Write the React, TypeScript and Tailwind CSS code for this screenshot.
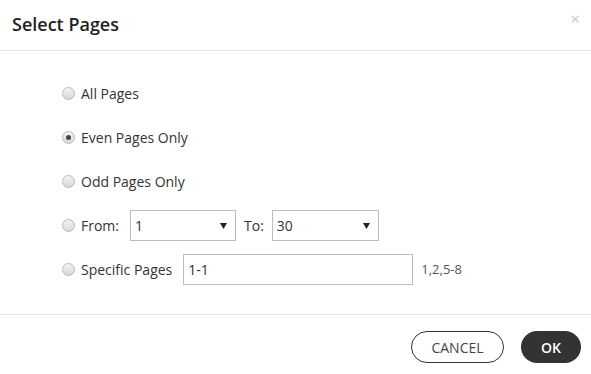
import React from "react";

function Radio({ checked }: { checked?: boolean }) {
  return (
    <span className="relative inline-flex h-[13px] w-[13px] shrink-0 items-center justify-center rounded-full border border-[#b9b9b9] bg-gradient-to-b from-[#f4f4f4] to-[#d8d8d8]">
      {checked && <span className="h-[5px] w-[5px] rounded-full bg-[#444]" />}
    </span>
  );
}

function Select({ value, w }: { value: string; w: string }) {
  return (
    <div className={`flex h-[31px] ${w} items-center justify-between border border-[#bdbdbd] bg-white pl-[4px] pr-[8px] text-[14px] text-[#333]`}>
      <span>{value}</span>
      <svg width="7" height="6" viewBox="0 0 7 6">
        <path d="M0 0 L7 0 L3.5 6 Z" fill="#222" />
      </svg>
    </div>
  );
}

export default function App() {
  return (
    <div className="flex h-[374px] w-[591px] flex-col bg-white text-[#333]" style={{ fontFamily: '"Open Sans", sans-serif' }}>
      <div className="relative flex h-[51px] shrink-0 items-center border-b border-[#e5e5e5] pl-[12px]">
        <h1 className="text-[18px] font-semibold leading-none text-[#222] pb-[2px]">Select Pages</h1>
        <span className="absolute right-[11px] top-[10px] text-[17px] leading-none text-[#c8c8c8]">×</span>
      </div>
      <div className="flex flex-1 flex-col gap-[13px] pl-[62px] pt-[27px] text-[14px]">
        <div className="flex h-[31px] items-center">
          <Radio />
          <span className="ml-[6px]">All Pages</span>
        </div>
        <div className="flex h-[31px] items-center">
          <Radio checked />
          <span className="ml-[6px]">Even Pages Only</span>
        </div>
        <div className="flex h-[31px] items-center">
          <Radio />
          <span className="ml-[6px]">Odd Pages Only</span>
        </div>
        <div className="flex h-[31px] items-center">
          <Radio />
          <span className="ml-[6px] mr-[11px]">From:</span>
          <Select value="1" w="w-[106px]" />
          <span className="ml-[8px] mr-[8px]">To:</span>
          <Select value="30" w="w-[107px]" />
        </div>
        <div className="flex h-[31px] items-center">
          <Radio />
          <span className="ml-[6px] mr-[11px]">Specific Pages</span>
          <div className="flex h-[31px] w-[230px] items-center border border-[#bdbdbd] pl-[4px]">1-1</div>
          <span className="ml-[8px] text-[13px] text-[#555]">1,2,5-8</span>
        </div>
      </div>
      <div className="flex h-[60px] shrink-0 items-start justify-end gap-[17px] border-t border-[#e5e5e5] pr-[10px] pt-[16px]">
        <button className="flex h-[32px] w-[93px] items-center justify-center rounded-full border border-[#333] bg-white text-[14px] text-[#444]">CANCEL</button>
        <button className="flex h-[32px] w-[60px] items-center justify-center rounded-full bg-[#333] text-[14px] font-semibold text-white">OK</button>
      </div>
    </div>
  );
}
